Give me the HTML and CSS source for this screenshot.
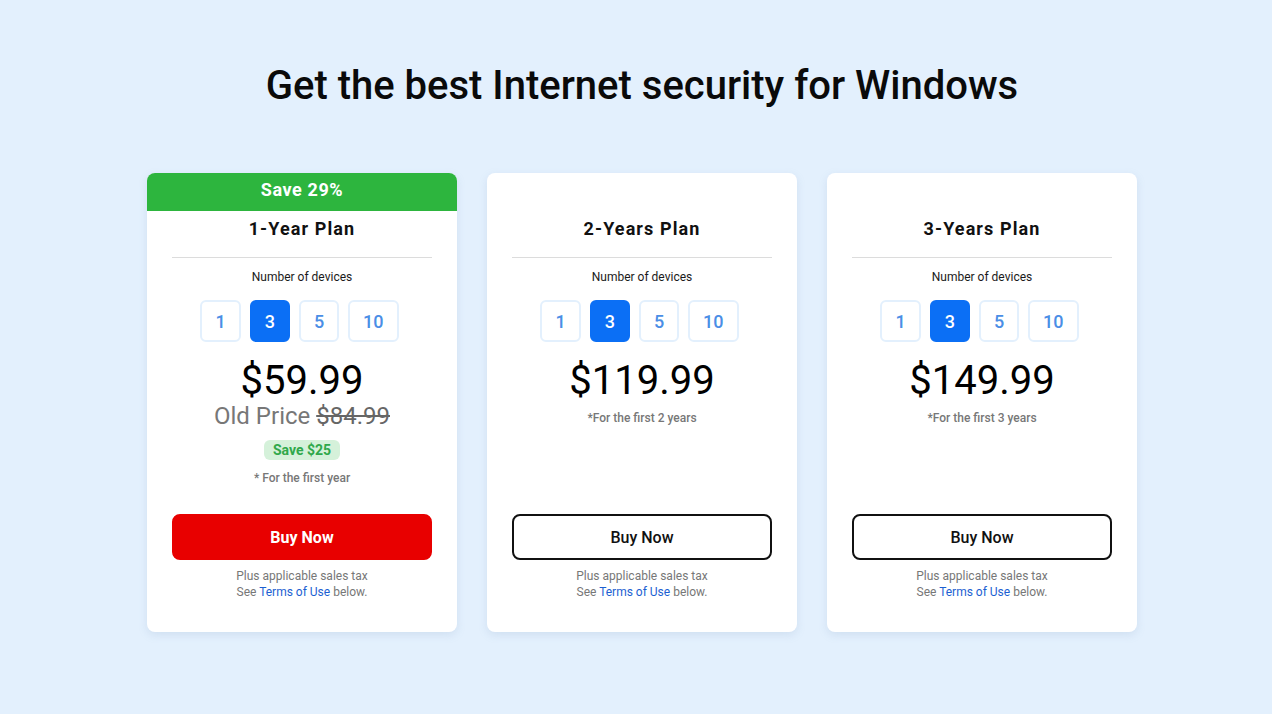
FILE: index.html
```html
<!DOCTYPE html>
<html lang="en">
<head>
    <meta charset="UTF-8">
    <meta name="viewport" content="width=device-width, initial-scale=1.0">
    <title>Internet security for Windows</title>
    <link rel="stylesheet" href="styles.css">
</head>
<body>
    <div class="page">
        <h1 class="heading">Get the best Internet security for Windows</h1>

        <div class="plans">
            <!-- 1 year plan, highlighted -->
            <div class="plan">
                <div class="banner">Save 29%</div>
                <h2 class="plan-title">1-Year Plan</h2>
                <div class="devices-label">Number of devices</div>
                <div class="devices">
                    <button class="device">1</button>
                    <button class="device active">3</button>
                    <button class="device">5</button>
                    <button class="device">10</button>
                </div>
                <div class="price">$59.99</div>
                <div class="old-price">Old Price <s>$84.99</s></div>
                <div class="save">Save $25</div>
                <div class="note note-first">* For the first year</div>
                <button class="buy buy-red">Buy Now</button>
                <p class="tax">Plus applicable sales tax<br>See <a href="#">Terms of Use</a> below.</p>
            </div>

            <!-- 2 years plan -->
            <div class="plan">
                <div class="banner banner-empty"></div>
                <h2 class="plan-title">2-Years Plan</h2>
                <div class="devices-label">Number of devices</div>
                <div class="devices">
                    <button class="device">1</button>
                    <button class="device active">3</button>
                    <button class="device">5</button>
                    <button class="device">10</button>
                </div>
                <div class="price">$119.99</div>
                <div class="note">*For the first 2 years</div>
                <button class="buy">Buy Now</button>
                <p class="tax">Plus applicable sales tax<br>See <a href="#">Terms of Use</a> below.</p>
            </div>

            <!-- 3 years plan -->
            <div class="plan">
                <div class="banner banner-empty"></div>
                <h2 class="plan-title">3-Years Plan</h2>
                <div class="devices-label">Number of devices</div>
                <div class="devices">
                    <button class="device">1</button>
                    <button class="device active">3</button>
                    <button class="device">5</button>
                    <button class="device">10</button>
                </div>
                <div class="price">$149.99</div>
                <div class="note">*For the first 3 years</div>
                <button class="buy">Buy Now</button>
                <p class="tax">Plus applicable sales tax<br>See <a href="#">Terms of Use</a> below.</p>
            </div>
        </div>
    </div>
</body>
</html>
```

FILE: styles.css
```css
* {
    box-sizing: border-box;
    margin: 0;
    padding: 0;
}

body {
    background-color: #e3f0fd;
    font-family: Roboto, "Liberation Sans", Arial, sans-serif;
    color: #000;
    height: 714px;
    overflow: hidden;
}

.page {
    padding: 62px 0 0 12px;
}

.heading {
    text-align: center;
    font-size: 40px;
    line-height: 48px;
    font-weight: 500;
    color: #0a0a0a;
}

.plans {
    display: flex;
    justify-content: center;
    gap: 30px;
    margin-top: 63px;
}

.plan {
    width: 310px;
    background-color: #fff;
    border-radius: 8px;
    box-shadow: 0 3px 8px rgba(120, 150, 190, 0.18);
    display: flex;
    flex-direction: column;
    align-items: center;
    padding: 0 25px 32px;
    overflow: hidden;
}

.banner {
    width: calc(100% + 50px);
    height: 38px;
    line-height: 34px;
    background-color: #2db53e;
    color: #fff;
    font-size: 18px;
    font-weight: 700;
    letter-spacing: 0.6px;
    text-align: center;
}

.banner-empty {
    background-color: transparent;
}

.plan-title {
    width: 100%;
    text-align: center;
    font-size: 18px;
    line-height: 24px;
    font-weight: 700;
    letter-spacing: 1.1px;
    padding: 6px 0 16px;
    border-bottom: 1px solid #dcdcdc;
    color: #111;
}

.devices-label {
    font-size: 12px;
    line-height: 16px;
    margin-top: 11px;
    color: #1a1a1a;
}

.devices {
    display: flex;
    gap: 4px;
    margin-top: 15px;
}

.device {
    height: 42px;
    min-width: 40px;
    padding: 0 13px;
    margin-right: 5px;
    border: 2px solid #e3f0fd;
    border-radius: 6px;
    background-color: #fff;
    color: #4a8ee6;
    font-family: inherit;
    font-size: 18px;
    font-weight: 500;
    cursor: pointer;
}

.device.active {
    background-color: #0b6ff5;
    border-color: #0b6ff5;
    color: #fff;
}

.price {
    font-size: 40px;
    line-height: 46px;
    margin-top: 16px;
    color: #000;
}

.old-price {
    font-size: 24px;
    line-height: 24px;
    color: #777;
}

.old-price s {
    color: #666;
}

.save {
    margin-top: 12px;
    padding: 1px 9px;
    font-size: 14px;
    line-height: 18px;
    font-weight: 700;
    color: #2fa84a;
    background-color: #d5f1da;
    border-radius: 6px;
}

.note {
    font-size: 12px;
    line-height: 16px;
    font-weight: 500;
    color: #777;
    margin-top: 6px;
}

.note-first {
    margin-top: 10px;
}

.buy {
    margin-top: auto;
    width: 100%;
    height: 46px;
    border: 2px solid #111;
    border-radius: 8px;
    background-color: #fff;
    color: #111;
    font-family: inherit;
    font-size: 16px;
    font-weight: 500;
    cursor: pointer;
}

.buy-red {
    margin-top: 28px;
    background-color: #e80000;
    border-color: #e80000;
    color: #fff;
    font-weight: 700;
}

.tax {
    margin-top: 8px;
    text-align: center;
    font-size: 12px;
    line-height: 16px;
    color: #777;
}

.tax a {
    color: #1c5fd2;
    text-decoration: none;
}
```
